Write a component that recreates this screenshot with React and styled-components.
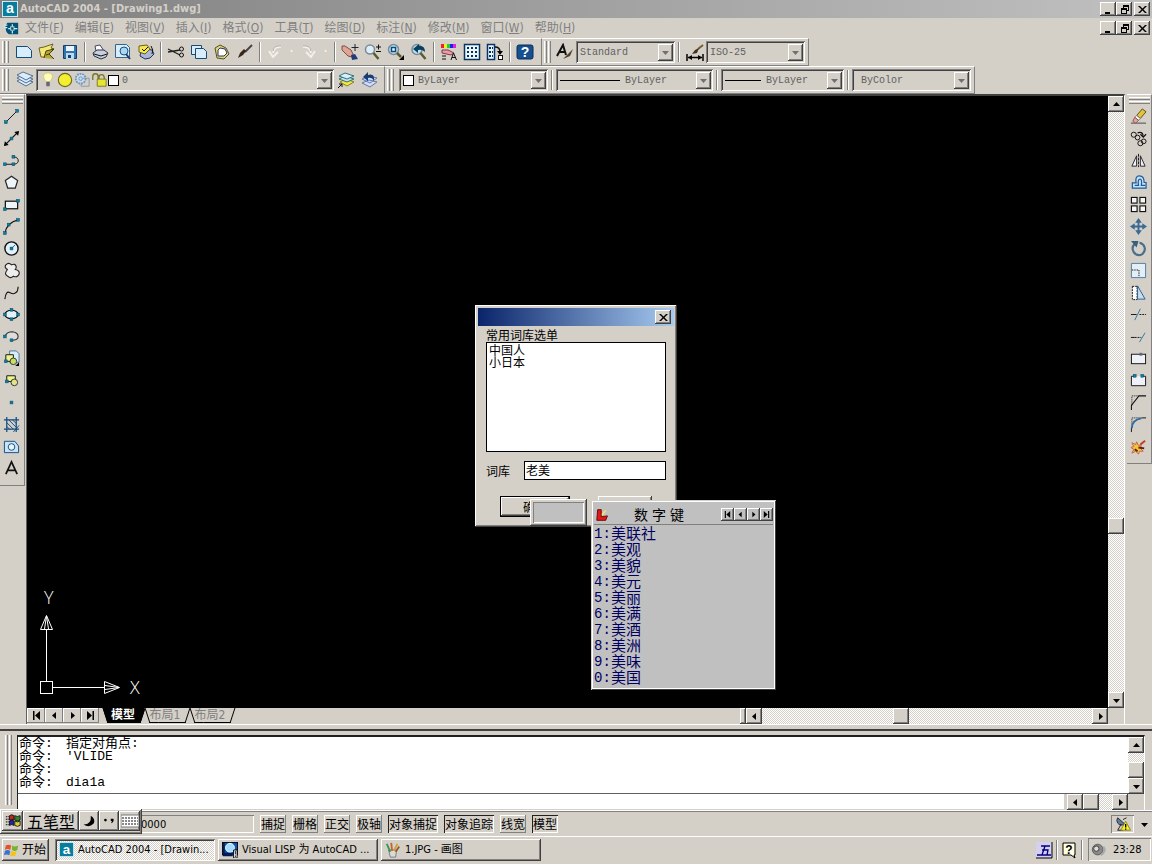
import React from "react";
import styled, { createGlobalStyle, css } from "styled-components";

const face = "#d4d0c8";
const ui = '"DejaVu Sans Condensed", "Noto Sans CJK SC", sans-serif';
const cjk = '"Noto Sans CJK SC", sans-serif';
const mono = '"Liberation Mono", "Noto Sans CJK SC", monospace';

const raised = css`
  box-shadow: inset -1px -1px #404040, inset 1px 1px #fff, inset -2px -2px #808080;
`;
const sunken = css`
  box-shadow: inset 1px 1px #808080, inset -1px -1px #fff, inset 2px 2px #404040;
`;
const thinSunken = css`
  box-shadow: inset 1px 1px #808080, inset -1px -1px #fff;
`;
const dither = css`
  background: repeating-conic-gradient(#ffffff 0 25%, #d4d0c8 0 50%) 0 0 / 2px 2px;
`;

const Global = createGlobalStyle`
  *, *::before, *::after { box-sizing: border-box; }
  body { margin: 0; background: ${face}; font: 11px/14px ${ui}; color: #000; overflow: hidden; }
  button, input, select { font: inherit; color: inherit; margin: 0; padding: 0; border: 0; border-radius: 0; background: none; outline: 0; }
  svg { display: block; flex: none; }
`;

/* ---------- window frame ---------- */
const Shell = styled.div`
  position: relative;
  display: flex;
  flex-direction: column;
  min-height: 100vh;
  background: ${face};
`;
const TitleBar = styled.header`
  display: flex;
  align-items: center;
  height: 18px;
  padding: 0 2px;
  gap: 2px;
  background: linear-gradient(90deg, #808080, #c0c0c0);
`;
const Title = styled.h1`
  flex: 1;
  margin: 0;
  color: ${face};
  font-size: 11px;
  font-weight: 700;
  line-height: 16px;
`;
const Controls = styled.div`
  display: flex;
  button:last-child { margin-left: 2px; }
`;
const BoxButton = styled.button`
  display: grid;
  place-items: center;
  width: 16px;
  height: 14px;
  background: ${face};
  ${raised}
`;
const MenuBar = styled.nav`
  display: flex;
  align-items: center;
  height: 20px;
  padding: 0 2px 0 4px;
`;
const MenuList = styled.div`
  display: flex;
  flex: 1;
`;
const MenuItem = styled.button`
  padding: 0 5px 0 6px;
  color: #808080;
  font-size: 12px;
  line-height: 18px;
`;

/* ---------- toolbars ---------- */
const ToolRow = styled.div`
  display: flex;
  height: 28px;
`;
const ToolBar = styled.div`
  display: flex;
  align-items: center;
  padding-right: ${(p) => p.$end || 5}px;
  border: solid;
  border-width: 1px 1px 1px 0;
  border-color: #fff #808080 #808080 #fff;
  box-shadow: 0 1px #fff;
`;
const Grip = styled.span`
  flex: none;
  width: 8px;
  height: ${(p) => p.$h || 22}px;
  margin: 0 ${(p) => p.$gap ?? 3}px 0 2px;
  background: linear-gradient(90deg, #fff 0 1px, ${face} 1px 2px, #808080 2px 3px, transparent 3px 4px, #fff 4px 5px, ${face} 5px 6px, #808080 6px 7px, transparent 7px);
`;
const ToolButton = styled.button`
  display: grid;
  place-items: center;
  width: 23px;
  height: 22px;
  flex: none;
`;
const DropDot = styled.button`
  width: 11px;
  height: 22px;
  color: #f4f2ee;
  font-size: 16px;
`;
const Divider = styled.span`
  width: 2px;
  height: 20px;
  margin: 0 ${(p) => p.$r ?? 2}px 0 3px;
  flex: none;
  border-left: 1px solid #808080;
  border-right: 1px solid #fff;
`;
const Combo = styled.div`
  display: flex;
  align-items: center;
  gap: 1px;
  flex: none;
  width: ${(p) => p.$w}px;
  height: 22px;
  padding: 2px 2px 2px 4px;
  ${sunken}
`;
const ComboSelect = styled.select`
  appearance: none;
  flex: 1;
  min-width: 0;
  height: 18px;
  padding: 2px 0 0 ${(p) => p.$pad || 0}px;
  color: #606060;
  font: 10px/16px ${mono};
`;
const ComboArrow = styled.span`
  display: grid;
  place-items: center;
  width: 15px;
  height: 17px;
  flex: none;
  pointer-events: none;
  background: ${face};
  ${raised}
`;
const Swatch = styled.span`
  width: 11px;
  height: 11px;
  flex: none;
  border: 1px solid #000;
  background: #fff;
`;
const LineSample = styled.span`
  width: ${(p) => p.$w}px;
  height: 1px;
  flex: none;
  background: #000;
`;

/* ---------- workspace ---------- */
const Workspace = styled.main`
  display: flex;
  flex: 1;
  min-height: 400px;
  border-bottom: 1px solid #fff;
`;
const SideBar = styled.aside`
  align-self: flex-start;
  display: flex;
  flex-direction: column;
  align-items: flex-start;
  width: 25px;
  padding-bottom: 6px;
  border: solid;
  border-width: 1px 1px 1px 0;
  border-color: #fff #808080 #808080 #fff;
`;
const SideGrip = styled.span`
  width: 21px;
  height: 8px;
  margin: 2px 0 0 2px;
  background: linear-gradient(#fff 0 1px, ${face} 1px 2px, #808080 2px 3px, transparent 3px 4px, #fff 4px 5px, ${face} 5px 6px, #808080 6px 7px, transparent 7px);
`;
const Doc = styled.section`
  flex: 1;
  min-width: 0;
  display: grid;
  grid-template-columns: 1fr 16px;
  grid-template-rows: 1fr 16px;
  margin: 0 2px 0 1px;
  border: solid;
  border-width: 2px 1px 0 1px;
  border-color: #404040 #fff #fff #606060;
`;
const Canvas = styled.div`
  display: flex;
  align-items: flex-end;
  padding: 0 0 8px 9px;
  background: #000;
`;
const ScrollTrack = styled.div`
  display: flex;
  flex-direction: ${(p) => (p.$v ? "column" : "row")};
  ${(p) => (p.$w ? `width: ${p.$w}px;` : "flex: 1;")}
  ${dither}
`;
const ScrollBox = styled.button`
  display: grid;
  place-items: center;
  width: 16px;
  height: 16px;
  flex: none;
  background: ${face};
  ${raised}
`;
const Gap = styled.span`
  flex: ${(p) => p.$f} 1 0;
`;
const DocFoot = styled.div`
  display: flex;
  min-width: 0;
`;
const TabNav = styled.button`
  display: grid;
  place-items: center;
  width: 18px;
  height: 15px;
  box-shadow: inset -1px -1px #808080, inset 1px 1px #fff;
`;
const Tabs = styled.div`
  display: flex;
  flex: 1;
  padding-left: 4px;
`;
const Tab = styled.button`
  position: relative;
  width: ${(p) => (p.$on ? 42 : 45)}px;
  height: 15px;
  padding-right: ${(p) => (p.$on ? 2 : 5)}px;
  color: ${(p) => (p.$on ? "#fff" : "#808080")};
  font-weight: ${(p) => (p.$on ? 700 : 400)};
  font-size: 12px;
  line-height: 13px;
  isolation: isolate;
  &::before, &::after {
    content: "";
    position: absolute;
    z-index: -1;
    top: 0;
    bottom: 0;
    width: 60%;
    border: 1px solid #000;
    border-top: 0;
    background: ${(p) => (p.$on ? "#000" : face)};
  }
  &::before { left: 2px; border-right: 0; transform: skewX(18deg); }
  &::after { right: 2px; border-left: 0; transform: skewX(-18deg); }
`;
const Splitter = styled.span`
  width: 6px;
  background: ${face};
  ${raised}
`;

/* ---------- command line ---------- */
const Command = styled.section`
  display: flex;
  height: 86px;
  padding: 10px 7px 0 3px;
  border-bottom: 1px solid #fff;
  background: linear-gradient(${face} 0 4px, #404040 4px 6px, ${face} 6px);
`;
const CommandBody = styled.div`
  flex: 1;
  display: grid;
  grid-template-columns: 1fr 16px;
  grid-template-rows: 57px 16px;
  border-top: 2px solid #202020;
  border-left: 1px solid #202020;
  border-right: 1px solid #fff;
`;
const History = styled.div`
  padding: 0 1px;
  background: #fff;
  border-bottom: 1px solid #606060;
`;
const HistoryLine = styled.div`
  display: flex;
  height: 13px;
  white-space: pre;
  font: 13px/13px ${mono};
`;
const Prompt = styled.span`
  width: 47px;
`;
const CommandEntry = styled.div`
  display: flex;
  min-width: 0;
`;
const CommandInput = styled.input`
  flex: 1;
  min-width: 0;
  height: 15px;
  margin-right: 3px;
  background: #fff;
  font: 13px/15px ${mono};
`;

/* ---------- status bar and taskbar ---------- */
const StatusBar = styled.div`
  display: flex;
  align-items: center;
  gap: 6px;
  height: 25px;
  padding-right: 3px;
  border-top: 1px solid #808080;
`;
const Coords = styled.output`
  width: 254px;
  height: 18px;
  padding-left: 141px;
  line-height: 19px;
  ${thinSunken}
`;
const Toggle = styled.button`
  height: 18px;
  padding: 0 1px;
  font-size: 12px;
  line-height: 20px;
  ${(p) => (p.$on ? "box-shadow: inset 1px 1px #202020, inset -1px -1px #fff;" : "box-shadow: inset -1px -1px #808080, inset 1px 1px #fff;")}
`;
const Spring = styled.span`
  flex: 1;
`;
const StatusTray = styled.button`
  display: grid;
  place-items: center;
  width: 23px;
  height: 18px;
  ${thinSunken}
`;
const TaskBar = styled.footer`
  display: flex;
  align-items: center;
  gap: 3px;
  height: 28px;
  padding: 0 1px 2px 2px;
  border-top: 1px solid #fff;
`;
const StartButton = styled.button`
  display: flex;
  align-items: center;
  gap: 2px;
  width: 47px;
  height: 22px;
  margin-right: 3px;
  padding-left: 2px;
  font-size: 12px;
  background: ${face};
  ${raised}
`;
const TaskButton = styled.button`
  display: flex;
  align-items: center;
  gap: 4px;
  width: 160px;
  height: 22px;
  padding: 0 4px;
  white-space: nowrap;
  background: ${face};
  ${raised}
  ${(p) => p.$on && dither}
  ${(p) => p.$on && sunken}
`;
const Tray = styled.div`
  display: flex;
  align-items: center;
`;
const TrayButton = styled.button`
  display: grid;
  place-items: center;
  width: 18px;
  height: 22px;
`;
const Clock = styled.div`
  display: flex;
  align-items: center;
  gap: 6px;
  width: 63px;
  height: 23px;
  padding-left: 3px;
  ${thinSunken}
`;

/* ---------- floating windows ---------- */
const Floating = styled.div`
  position: absolute;
  left: ${(p) => p.$x}px;
  top: ${(p) => p.$y}px;
`;
const Dialog = styled.form`
  display: flex;
  flex-direction: column;
  width: 202px;
  height: 222px;
  padding: 3px;
  font: 12px/14px ${cjk};
  background: ${face};
  ${raised}
`;
const DialogTitle = styled.div`
  display: flex;
  align-items: center;
  justify-content: flex-end;
  height: 18px;
  padding-right: 3px;
  background: linear-gradient(90deg, #0a246a, #a6caf0);
`;
const DialogBody = styled.div`
  display: flex;
  flex-direction: column;
  padding: 2px 8px 0 8px;
`;
const Label = styled.label`
  line-height: 14px;
`;
const WordList = styled.select`
  height: 110px;
  overflow: hidden;
  border: 1px solid #000;
  background: #fff;
  option {
    display: flex;
    align-items: center;
    height: 12px;
    min-height: 12px;
    padding: 0 2px;
  }
`;
const Field = styled.div`
  display: flex;
  align-items: center;
  gap: 14px;
  margin-top: 9px;
`;
const TextInput = styled.input`
  flex: 1;
  min-width: 0;
  height: 19px;
  padding: 0 1px 2px;
  border: 1px solid #000;
  background: #fff;
`;
const DialogButtons = styled.div`
  display: flex;
  gap: 28px;
  margin-top: 16px;
  padding-left: 14px;
`;
const PushButton = styled.button`
  flex: none;
  width: ${(p) => (p.$main ? 70 : 54)}px;
  height: 21px;
  border: ${(p) => (p.$main ? "1px solid #000" : "0")};
  ${raised}
`;
const Composition = styled.div`
  width: 57px;
  height: 27px;
  padding: 3px;
  background: ${face};
  ${raised}
  &::before {
    content: "";
    display: block;
    height: 21px;
    background: #c0c0c0;
    box-shadow: inset 1px 1px #808080, inset -1px -1px #fff;
  }
`;
const Candidates = styled.section`
  width: 185px;
  height: 190px;
  padding: 3px;
  background: #c0c0c0;
  box-shadow: inset 1px 1px #d4d0c8, inset -1px -1px #404040, inset 2px 2px #fff, inset -2px -2px #fff;
`;
const CandidateHead = styled.header`
  display: flex;
  align-items: center;
  height: 22px;
  padding: 2px 0 0 1px;
  border-bottom: 1px solid #808080;
`;
const CandidateTitle = styled.h2`
  flex: 1;
  margin: 0;
  padding-right: 14px;
  text-align: center;
  font: 400 14px/18px ${ui};
`;
const Pager = styled.button`
  display: grid;
  place-items: center;
  width: 13px;
  height: 13px;
  ${raised}
`;
const CandidateList = styled.ol`
  margin: 0;
  padding: 0;
  list-style: none;
  color: #000060;
  font: 15px/15px ${cjk};
  li { display: flex; height: 16px; }
`;
const Key = styled.span`
  width: 17px;
  font: 14px/18px ${mono};
`;
const ImeBar = styled.div`
  display: flex;
  width: 142px;
  height: 25px;
  padding: 2px;
  background: ${face};
  ${raised}
`;
const ImeButton = styled.button`
  display: grid;
  place-items: center;
  width: ${(p) => p.$w}px;
  height: 20px;
  font: 16px/18px ${cjk};
  ${raised}
`;

/* ---------- drawings ---------- */
const K = { stroke: "#111", fill: "none" };
const pt = (x, y) => <rect key={x + "-" + y} x={x - 1.5} y={y - 1.5} width="3" height="3" fill="#0c7f9d" stroke="#04466a" strokeWidth=".5" />;
const sheet = "#d8edfb";

const art = {
  acad: <><rect width="18" height="18" fill="#e6f6fa" /><rect x="1" y="1" width="16" height="16" fill="#087d9c" /><text x="9" y="14" textAnchor="middle" fontFamily="Liberation Sans" fontWeight="700" fontSize="16" fill="#fff">a</text></>,
  dwg: <><path d="M4 2h13v14H6Q1 13 2 5z" fill="#07506f" /><path d="M0 5h4M0 8h4M5 9h3M12 9h4M10 4v3M10 12v3" stroke="#bdf0ff" strokeWidth="1.500" /><rect x="8" y="7" width="4" height="4" fill="#07506f" stroke="#bdf0ff" /></>,
  new: <path d="M1.500 3.500h11l4 4v7h-15z" fill={sheet} stroke="#174a75" />,
  open: <><path d="M1 5l5-1 9-3-2 4 3 1-4 3-3 5-6 0z" fill="#f5e87b" stroke="#6b6218" /><path d="M6 15l2-7 8-2-5 5 5 5M11 11l-3 1" fill="#b8a934" stroke="#453e0c" /></>,
  save: <><path d="M2.500 2.500h13v13h-13z" fill="#3375ad" stroke="#123e70" /><path d="M5 3h8v5H5z" fill="#e8f4ff" /><path d="M5 10h8v6H5z" fill="#b9d9ef" /><path d="M7 12h3v3H7z" fill="#123e70" /></>,
  print: <><path d="M5 8L4 3l5-1 4 6" fill="#fff" stroke="#446" /><path d="M2 10l4-3h7l4 3-2 4-5 2-7-3z" fill="#c8d0dc" stroke="#2a3050" /><path d="M3 11l7 2 6-2" {...K} /></>,
  preview: <><path d="M1.500 1.500h11l3 3v10h-14z" fill={sheet} stroke="#37648b" /><circle cx="10" cy="8" r="4" fill="#a8d8f5" stroke="#1d4f80" /><path d="M12 11l4 5" stroke="#1d3f60" strokeWidth="2" /></>,
  publish: <><path d="M4 9l5-3 6 1 2 4-4 4-5 1-5-3z" fill="#aab8d8" stroke="#223060" /><path d="M2 3l8-1 3 4-5 5-6-2z" fill="#f6e74c" stroke="#6b6218" /><path d="M5 6l2 2 4-4M14 3q3 4 1 8" {...K} /></>,
  cut: <><path d="M1 6l12 6M1 9l12-2" stroke="#222" strokeWidth="1.300" /><circle cx="14.500" cy="6" r="2" {...K} /><circle cx="14.500" cy="12" r="2" {...K} /></>,
  copy: <><path d="M1.500 2.500h10v9h-10z" fill={sheet} stroke="#174a75" /><path d="M5.500 5.500h8l3 3v7h-11z" fill={sheet} stroke="#174a75" /></>,
  paste: <><path d="M2 5l5-3 6 3 3 6-5 5-7-1z" fill="#d9d38a" stroke="#55501c" /><path d="M5 7l2-2 5 1 2 4-3 3H5z" fill="#fff" stroke="#335" /></>,
  brush: <><path d="M16 2l-7 7" stroke="#444" strokeWidth="2" /><path d="M10 8L7 12l-5 3 2-5 4-4z" fill="#3b2418" /></>,
  undo: <><path d="M15 4q-7-1-8 6M3 8l4 6 5-5" fill="none" stroke="#f2f0ec" strokeWidth="2" /><path d="M15 3q-7-1-8 5" fill="none" stroke="#b4b0a8" /></>,
  redo: <><path d="M3 4q7-1 8 6M6 9l5 5 4-6" fill="none" stroke="#f2f0ec" strokeWidth="2" /><path d="M3 3q7-1 8 5" fill="none" stroke="#b4b0a8" /></>,
  pan: <><path d="M1 3l3 0 6 4 2 4-1 3-4-1-6-6z" fill="#e0a494" stroke="#824b43" /><path d="M10 12l4-1 3 5-6 1z" fill="#203b7c" /><path d="M14 1v7M10.500 4.500h7" stroke="#223" /></>,
  zoom: <><circle cx="6" cy="6.500" r="4.500" fill="#dceefa" stroke="#7a8a98" strokeWidth="1.500" /><path d="M9.500 10l5 6" stroke="#5b5b30" strokeWidth="2.500" /><path d="M12 4h5M14.500 1.500v5M12 8.500h5" stroke="#111" /></>,
  zoomWin: <><circle cx="6.500" cy="6.500" r="5" fill="#bde2f7" stroke="#7a8a98" strokeWidth="1.500" /><rect x="4.500" y="4.500" width="4" height="4" fill="#fff" stroke="#064c78" strokeWidth="1.500" /><path d="M10 10l4 4" stroke="#5b5b30" strokeWidth="2.500" /><path d="M17 12v5h-5z" /></>,
  zoomPrev: <><circle cx="7" cy="6.500" r="5" fill="#bde2f7" stroke="#7a8a98" strokeWidth="1.500" /><path d="M10.500 10l5 6" stroke="#5b5b30" strokeWidth="2.500" /><path d="M15 9q0-7-6-6V1L3 6l5 4V7q4-1 7 2z" fill="#07405f" /></>,
  props: <><path d="M1 1h3v4H1z" fill="#e22" /><path d="M4 1h3v4H4z" fill="#ee2" /><path d="M7 1h3v4H7z" fill="#2c4" /><path d="M10 1h3v4h-3z" fill="#22e" /><path d="M13 1h3v4h-3z" fill="#d2d" /><path d="M2 7l6 0 6 3-3 2-9-2z" fill="#e4a0a4" stroke="#8b3344" /><path d="M2 13h4M2 16h4M11 17l2.500-7 3 7M12 14.500h4" stroke="#111" fill="none" /></>,
  center: <><rect x="1.500" y="1.500" width="15" height="15" fill="#eaf7ff" stroke="#07335b" strokeWidth="1.500" />{[4, 8, 12].map((y) => [4, 8, 12].map((x) => <rect key={x + "," + y} x={x} y={y} width="2" height="2" fill="#07335b" />))}</>,
  palettes: <><rect x="1.500" y="1.500" width="7" height="15" fill="#eaf7ff" stroke="#07336b" strokeWidth="1.500" /><path d="M3 5h4M3 9h4M3 13h4" stroke="#07336b" strokeWidth="2" strokeDasharray="2 1" /><path d="M9 4q5 0 5 5" {...K} strokeWidth="1.500" /><path d="M11 8l3 4 3-4z" /><rect x="12.500" y="12.500" width="4" height="4" fill="#fff" stroke="#111" /></>,
  help: <><rect x="1" y="2" width="16" height="14" rx="2" fill="#17508f" stroke="#062a5c" /><text x="9" y="14" textAnchor="middle" fontFamily="Liberation Sans" fontWeight="700" fontSize="14" fill="#fff">?</text></>,
  textStyle: <><path d="M1 13L7 2l3 10M4 9h5" fill="none" stroke="#111" strokeWidth="2" /><path d="M17 6l-5 5-5 5 7-3z" fill="#4f4428" /></>,
  dimStyle: <><path d="M1 11v7M17 11v7M2 14.500h14" stroke="#000" strokeWidth="1.500" /><path d="M2 14.500l4-2.500v5zM16 14.500l-4-2.500v5z" /><path d="M17 2l-5 4" stroke="#775c35" strokeWidth="2" /><path d="M13 5l-2 5-5 1 3-4z" fill="#3f3020" /></>,
  layers: <>{[10, 7, 4].map((y) => <path key={y} d={`M1 ${y}l6-3 10 4-7 4z`} fill="#d7ecfc" stroke="#55708d" />)}</>,
  bulb: <><path d="M4 5q0-4 5-4t5 4q0 3-3 6H7Q4 8 4 5z" fill="#fffbbd" stroke="#d6c96c" /><path d="M7 11h4v5H7z" fill="#667" /></>,
  sun: <circle cx="9" cy="9" r="7.500" fill="#f4ee31" stroke="#6d6b22" strokeWidth="1.300" />,
  freeze: <><circle cx="7.500" cy="7.500" r="5.500" fill="#c5dcef" stroke="#7292b5" strokeWidth="2" strokeDasharray="2 1" /><circle cx="7.500" cy="7.500" r="2" fill="none" stroke="#7292b5" /><path d="M10 7h7v9H8v-3" fill="none" stroke="#8296ab" /></>,
  lock: <><path d="M2 9V5q0-3 3-3t3 3v4M9 8V6q0-3 3-3t3 5" fill="none" stroke="#79742d" strokeWidth="1.500" /><path d="M7 8h10v8H7z" fill="#e5e633" stroke="#77741e" /></>,
  makeLayer: <><path d="M3 11l6-3 8 3-7 4z" fill="#f0e83f" stroke="#88801a" /><path d="M2 8l6-3 9 3-7 3z" fill="#bfe2e8" stroke="#33717c" /><path d="M2 5l6-3 9 3-7 3z" fill="#d8effa" stroke="#33717c" /><path d="M1 17l4-4M2 13h3v3" {...K} /></>,
  layerPrev: <><path d="M2 12l7-3 8 2-7 5zM2 8l7-3 8 2-7 5z" fill="#ccdcfa" stroke="#6977a5" /><path d="M14 10q1-8-6-6V1L3 6l5 4V7q4-1 6 3z" fill="#153e75" /></>,
  line: <><path d="M3 15L15 3" {...K} />{[pt(3, 15), pt(15, 3)]}</>,
  xline: <><path d="M2 16L16 2" {...K} strokeWidth="1.300" /><path d="M1 17l1-5 4 4zM17 1l-5 1 4 4z" />{pt(9, 9)}</>,
  pline: <><path d="M2 13h10q5-1 4-5-1-3-5-3" {...K} />{[pt(2, 13), pt(11, 13), pt(11, 5)]}</>,
  polygon: <path d="M9 2.500l6.500 4.500-2.500 8H5L2.500 7z" fill="#eef6fa" stroke="#222" strokeWidth="1.300" />,
  rect: <><rect x="2.500" y="5.500" width="13" height="8" fill="#eef6fa" stroke="#111" strokeWidth="1.300" />{[pt(2, 14), pt(16, 5)]}</>,
  arc: <><path d="M2 16Q4 5 16 2" {...K} strokeWidth="1.200" />{[pt(2, 16), pt(6, 7), pt(16, 2)]}</>,
  circle: <><circle cx="9" cy="9" r="7" fill="#e3f2fa" stroke="#111" strokeWidth="1.500" /><path d="M9 9l4-4" stroke="#087d9c" />{pt(9, 9)}</>,
  cloud: <path d="M5 8Q1 6 3 3q3-3 6 0 4-2 5 2 0 2-1 3 5 1 4 5-2 4-6 2-3 3-6 0-4-2-1-6 0-1 1-1z" fill="#eee" stroke="#222" strokeWidth="1.200" />,
  spline: <path d="M2 16Q3 7 7 9t5 1q4-1 4-7" {...K} strokeWidth="1.200" />,
  ellipse: <><ellipse cx="9" cy="9" rx="7" ry="4.500" fill="#e3f2fa" stroke="#111" strokeWidth="1.200" />{[pt(2, 9), pt(16, 9), pt(9, 4), pt(9, 14)]}</>,
  ellArc: <><path d="M2 9q2-5 8-5 6 1 6 5t-7 4" fill="#ddd" stroke="#333" strokeWidth="1.200" />{[pt(2, 9), pt(9, 13)]}</>,
  insert: <><path d="M7 1h7l3 3v9H7z" fill={sheet} stroke="#49759b" /><path d="M3 5h8v7H3z" fill="#eef58d" stroke="#111" /><circle cx="11" cy="12" r="3.500" fill="#c8df66" stroke="#333" /><path d="M17 13v4h-4z" />{pt(3, 12)}</>,
  block: <><path d="M4 4h9v6H4z" fill="#eef58d" stroke="#111" /><circle cx="12" cy="11" r="3.500" fill="#dfe48a" stroke="#333" />{pt(4, 10)}</>,
  point: pt(9, 9),
  hatch: <><path d="M4 1v16M14 1v16M1 4h16M1 14h16" stroke="#124a80" strokeWidth="1.300" /><path d="M4 7l7 7M4 11l3 3M6 4l8 8M10 4l4 4M11 17l6-7" stroke="#124a80" /></>,
  region: <><path d="M1.500 3.500h11l4 5v7h-15z" fill="#c9e3f6" stroke="#124a80" /><circle cx="9" cy="9.500" r="3.500" fill="#e9f5fc" stroke="#124a80" /></>,
  mtext: <path d="M3 15L9 2l6 13M5 11h8" fill="none" stroke="#111" strokeWidth="1.800" />,
  erase: <><path d="M1 16h16" stroke="#444" /><path d="M7 8L13 1l4 3-6 7z" fill="#e3c23c" stroke="#5a4a1b" /><path d="M7 8l4 3-2 2-4-3z" fill="#fff" stroke="#777" /><path d="M5 10l4 3-3 3-3-2z" fill="#f0a0a0" stroke="#8b5353" /></>,
  copyObj: <><circle cx="4" cy="5" r="2.700" {...K} /><circle cx="8" cy="8" r="2.500" {...K} /><circle cx="11" cy="14" r="2.700" {...K} /><circle cx="14.500" cy="12" r="2.500" {...K} /><path d="M8 3q5-2 6 3M11 4.500l3 3 3-3" {...K} strokeWidth="1.300" /></>,
  mirror: <><path d="M9 2v14" stroke="#111" strokeDasharray="3 1" /><path d="M7 4v11H2zM11 4v11h5z" fill="#eef" stroke="#222" /></>,
  offset: <path d="M2.500 15V9.500h4Q5 2 10 2t5 7h2v6zM5 12h4Q8 5.500 10.500 5.500T12 12h4" fill="#c9e2fb" stroke="#1d5c96" strokeWidth="1.300" />,
  array: <>{[[1.5, 1.5], [10.5, 1.5], [1.5, 10.5], [10.5, 10.5]].map(([x, y]) => <rect key={x + "," + y} x={x} y={y} width="6" height="6" fill="#f6f6f6" stroke="#111" strokeWidth="1.200" />)}</>,
  move: <><path d="M9 3v12M3 9h12" stroke="#3a6a93" strokeWidth="2" /><path d="M9 0l3.500 5h-7zM9 18l3.500-5h-7zM0 9l5-3.500v7zM18 9l-5-3.500v7z" fill="#3a6a93" /></>,
  rotate: <><path d="M5 4Q1 8 4 13q4 5 9 2 5-5 1-10-2-2-4-2" fill="none" stroke="#4a6f8c" strokeWidth="2.300" /><path d="M1 1h8L7 8z" fill="#3a5f7c" /></>,
  scale: <><path d="M1.500 1.500h15v15h-15z" fill="#e4eef6" stroke="#4e7ca3" /><path d="M2 8.500h7.500V16" fill="none" stroke="#111" strokeDasharray="1.500 1" /></>,
  stretch: <><path d="M2.500 2.500h5v14h-5z" fill="#fff" stroke="#111" strokeDasharray="2 1" /><path d="M8 2l8 14H8z" fill="#c9dcec" stroke="#245f93" /></>,
  trim: <><path d="M1 9h6" {...K} /><path d="M10 9h7" {...K} strokeDasharray="2 1" /><path d="M5 15l6-12" stroke="#2a7aa0" /></>,
  extend: <><path d="M1 10h4" {...K} /><path d="M5 10h7" {...K} strokeDasharray="2 1" /><path d="M10 15l6-10" stroke="#2a7aa0" /></>,
  breakPt: <><rect x="1.500" y="4.500" width="15" height="10" fill="#eef2f8" stroke="#111" /><rect x="10" y="3" width="3" height="3" fill="#667" /></>,
  breakSeg: <><path d="M5 4.500H1.500v10h15v-10H13" fill="#eef2f8" stroke="#111" />{[pt(5, 4), pt(13, 4)]}</>,
  chamfer: <><path d="M2 12V2h8" {...K} strokeDasharray="1 1" /><path d="M1.500 17v-5l8-10H17" {...K} strokeWidth="1.100" /></>,
  fillet: <><path d="M2 12V2h10" {...K} strokeDasharray="1 1" /><path d="M1.500 17v-5M12 2h5" {...K} /><path d="M2 13Q2 4 12 2.500" fill="none" stroke="#2f6da6" strokeWidth="2" /></>,
  explode: <><path d="M2 5l4 2 1-3 2 4 3-1-1 4 3 3-4 0-1 3-3-3-4 2 2-4-3-2 3-1z" fill="#f2c33d" stroke="#c36340" /><path d="M11 7l5-4" stroke="#c33b28" strokeWidth="2" /><path d="M9 10l6 1M5 12l3 2" stroke="#5c1d18" strokeWidth="2" /></>,
  flag: <><path d="M1 4h3M1 7h3M1 10h3M1 13h3" stroke="#111" strokeWidth="1.500" strokeDasharray="1 1" /><path d="M5 3q3-2 5 0v5q-2-2-5 0z" fill="#c22" stroke="#111" /><path d="M11 3q3 2 6 0v5q-3 2-6 0z" fill="#2a8a2a" stroke="#111" /><path d="M5 9q3-2 5 0v5q-2-2-5 0z" fill="#22a" stroke="#111" /><path d="M11 9q3 2 6 0v5q-3 2-6 0z" fill="#dc3" stroke="#111" /></>,
  moon: <path d="M11 3q6 4 3 9-5 5-11 1 9 0 8-10z" />,
  punct: <><circle cx="5" cy="8" r="1.500" /><path d="M11 6.500h3q1 3-2 5l-.5-1 1-1.500H11z" /></>,
  keyboard: <><rect x="0" y="3" width="18" height="12" fill="#fff" stroke="#777" /><path d="M1 6h16M1 9h16M1 12h16" stroke="#888" strokeWidth="2" strokeDasharray="2 1" /></>,
  windows: <><path d="M2 4q3-2 6 0L7 9Q4 7 1 9z" fill="#e5532a" /><path d="M9 4q3 2 7 0l-1 5q-3 2-6 0z" fill="#75b52a" /><path d="M1 10q3-2 6 0l-1 5q-3-2-6 0z" fill="#3874cf" /><path d="M8 10q3 2 6 0l-1 5q-3 2-6 0z" fill="#f4c11d" /></>,
  lisp: <><rect x=".5" y=".5" width="17" height="14" fill="#0c54b2" stroke="#000" /><circle cx="9" cy="6.500" r="5" fill="#9fdcff" stroke="#fff" /><path d="M1 1h2v11h9v4H1z" fill="#041a55" /><path d="M13 9h4v9h-4z" fill="#fff" stroke="#000" /><path d="M15 10v4M15 15v2" stroke="#000" /></>,
  paint: <><path d="M4 9h9l-1 8H6z" fill="#d9d9d9" stroke="#777" /><path d="M6 11L2 2" stroke="#2a9c4a" strokeWidth="2" /><path d="M8 10L7 1" stroke="#d25b34" strokeWidth="2" /><path d="M10 10l4-8" stroke="#d2a224" strokeWidth="2" /><path d="M12 11l4-6" stroke="#8a5a3c" strokeWidth="2" /></>,
  dish: <><path d="M3 2l8 7q-5 3-8-1-2-3 0-6z" fill="#5d7c9c" stroke="#223" /><path d="M7 9l-4 7h6M9 4l4-2" {...K} /><path d="M12 6l5.500 10h-11z" fill="#f8f12c" stroke="#857d10" /><path d="M12 9v4M12 14v1.500" stroke="#000" strokeWidth="1.500" /></>,
  wubi: <><rect x="1" y="1" width="16" height="16" fill="#d4d0ee" /><path d="M17 1v16H1" stroke="#000" fill="none" /><path d="M6 5h9M10 5l-3 9M7 9h6l-1 5M2 14h14" stroke="#000080" fill="none" strokeWidth="1.300" /></>,
  askTip: <><path d="M3 2h12v12h-1l1 3-4-3H3z" fill="#ffffe1" stroke="#000" /><text x="9" y="12.500" textAnchor="middle" fontFamily="Liberation Sans" fontWeight="700" fontSize="12">?</text></>,
  speaker: <><circle cx="7.500" cy="8.500" r="6" fill="#8a8a8a" stroke="#555" /><circle cx="6" cy="7.500" r="3" fill="#ddd" stroke="#333" /><path d="M14 5q4 5-3 10" stroke="#aaa" fill="none" strokeWidth="2" /></>,
  imeLogo: <><path d="M3 3h4v8l7-1-2 5H2z" fill="#e01818" stroke="#600" /><path d="M8 9l4-5" stroke="#f3e36c" strokeWidth="2" /></>,
};

const Icon = ({ name, size = 18 }) => (
  <svg width={size} height={size} viewBox="0 0 18 18" aria-hidden="true">{art[name]}</svg>
);

const arrowPaths = {
  up: "M1 6h7L4.500 2z",
  down: "M1 3h7L4.500 7z",
  left: "M6 1v7L2 4.500z",
  right: "M3 1v7l4-3.500z",
  first: "M1 0h1.500v9H1zM8 0v9L3 4.500z",
  last: "M6.500 0H8v9H6.500zM1 0v9l5-4.500z",
};
const Arrow = ({ dir, color = "#000", size = 9 }) => (
  <svg width={size} height={size} viewBox="0 0 9 9" aria-hidden="true"><path d={arrowPaths[dir]} fill={color} /></svg>
);

const controlPaths = {
  minimize: "M1 7h5v2H1z",
  restore: "M3 0h6v6H7v3H1V3h2zM4 2v1h3v2h1V2zM2 5v3h4V5z",
  close: "M0 1h2l2.500 2.500L7 1h2L5.500 4.500 9 8H7L4.500 5.500 2 8H0l3.500-3.500z",
};
const WindowButton = ({ kind }) => (
  <BoxButton type="button" aria-label={kind}>
    <svg width="9" height="9" viewBox="0 0 9 9"><path fillRule="evenodd" d={controlPaths[kind]} /></svg>
  </BoxButton>
);
const WindowControls = () => (
  <Controls>
    <WindowButton kind="minimize" />
    <WindowButton kind="restore" />
    <WindowButton kind="close" />
  </Controls>
);

const Tools = ({ names }) => names.map((n, i) => {
  if (n === "|") return <Divider key={i} />;
  if (n === ".") return <DropDot key={i} aria-label="more">·</DropDot>;
  return <ToolButton key={i} aria-label={n}><Icon name={n} /></ToolButton>;
});
const Dropdown = ({ label, value, width, pad, children }) => (
  <Combo $w={width}>
    {children}
    <ComboSelect aria-label={label} $pad={pad} defaultValue={value}><option>{value}</option></ComboSelect>
    <ComboArrow><Arrow dir="down" color="#707070" /></ComboArrow>
  </Combo>
);
const Side = ({ names }) => (
  <SideBar>
    <SideGrip />
    {names.map((n) => <ToolButton key={n} aria-label={n}><Icon name={n} size={17} /></ToolButton>)}
  </SideBar>
);
const Scroll = ({ vertical, width, before, after }) => (
  <ScrollTrack $v={vertical} $w={width}>
    <ScrollBox aria-label="scroll back"><Arrow dir={vertical ? "up" : "left"} /></ScrollBox>
    <Gap $f={before} />
    <ScrollBox aria-label="thumb" />
    <Gap $f={after} />
    <ScrollBox aria-label="scroll forward"><Arrow dir={vertical ? "down" : "right"} /></ScrollBox>
  </ScrollTrack>
);

const menus = [["文件", "F"], ["编辑", "E"], ["视图", "V"], ["插入", "I"], ["格式", "O"], ["工具", "T"], ["绘图", "D"], ["标注", "N"], ["修改", "M"], ["窗口", "W"], ["帮助", "H"]];
const standard = ["new", "open", "save", "|", "print", "preview", "publish", "|", "cut", "copy", "paste", "brush", "|", "undo", ".", "redo", ".", "|", "pan", "zoom", "zoomWin", "zoomPrev", "|", "props", "center", "palettes", "|", "help"];
const drawTools = ["line", "xline", "pline", "polygon", "rect", "arc", "circle", "cloud", "spline", "ellipse", "ellArc", "insert", "block", "point", "hatch", "region", "mtext"];
const modifyTools = ["erase", "copyObj", "mirror", "offset", "array", "move", "rotate", "scale", "stretch", "trim", "extend", "breakPt", "breakSeg", "chamfer", "fillet", "explode"];
const history = ["指定对角点:", "'VLIDE", "", "dia1a"];
const toggles = [["捕捉"], ["栅格"], ["正交"], ["极轴"], ["对象捕捉", true], ["对象追踪", true], ["线宽"], ["模型", true]];
const candidates = ["美联社", "美观", "美貌", "美元", "美丽", "美满", "美酒", "美洲", "美味", "美国"];

const UcsIcon = () => (
  <svg width="120" height="114" viewBox="0 0 120 114" fill="none" stroke="#fff" aria-label="UCS">
    <rect x="4.500" y="95.500" width="12" height="12" />
    <path d="M10.500 95V44M17 101.500h52M10.500 29.500l-6 14h12zM10.500 30l-2 13M10.500 30l2 13M83.500 101.500l-15-6v12zM83 101.500l-14-2M83 101.500l-14 2" />
    <g fill="#fff" stroke="none" fontFamily="Open Sans, sans-serif" fontWeight="300" fontSize="18">
      <text x="8" y="18">Y</text>
      <text x="94" y="108">X</text>
    </g>
  </svg>
);

const WordDialog = () => (
  <Dialog onSubmit={(e) => e.preventDefault()}>
    <DialogTitle><WindowButton kind="close" /></DialogTitle>
    <DialogBody>
      <Label htmlFor="words">常用词库选单</Label>
      <WordList id="words" size={8}>
        <option>中国人</option>
        <option>小日本</option>
      </WordList>
      <Field>
        <Label htmlFor="word">词库</Label>
        <TextInput id="word" defaultValue="老美" />
      </Field>
      <DialogButtons>
        <PushButton $main>确定</PushButton>
        <PushButton type="button" aria-label="cancel" />
      </DialogButtons>
    </DialogBody>
  </Dialog>
);

const CandidateWindow = () => (
  <Candidates>
    <CandidateHead>
      <Icon name="imeLogo" size={16} />
      <CandidateTitle>数 字 键</CandidateTitle>
      {["first", "left", "right", "last"].map((d) => <Pager key={d} aria-label={d}><Arrow dir={d} size={7} /></Pager>)}
    </CandidateHead>
    <CandidateList>
      {candidates.map((word, i) => <li key={word}><Key>{(i + 1) % 10}:</Key>{word}</li>)}
    </CandidateList>
  </Candidates>
);

export default function App() {
  return (
    <Shell>
      <Global />
      <TitleBar>
        <Icon name="acad" size={16} />
        <Title>AutoCAD 2004 - [Drawing1.dwg]</Title>
        <WindowControls />
      </TitleBar>
      <MenuBar>
        <Icon name="dwg" size={15} />
        <MenuList>
          {menus.map(([name, key]) => <MenuItem key={key}>{name}(<u>{key}</u>)</MenuItem>)}
        </MenuList>
        <WindowControls />
      </MenuBar>

      <ToolRow>
        <ToolBar><Grip $gap={2} /><Tools names={standard} /></ToolBar>
        <ToolBar $end={3}>
          <Grip $gap={1} />
          <Tools names={["textStyle"]} />
          <Dropdown label="Text style" value="Standard" width={99} />
          <Divider $r={3} />
          <Tools names={["dimStyle"]} />
          <Dropdown label="Dimension style" value="ISO-25" width={99} />
        </ToolBar>
      </ToolRow>
      <ToolRow>
        <ToolBar $end={4}>
          <Grip />
          <Tools names={["layers"]} />
          <Dropdown label="Layer" value="0" width={298} pad={2}>
            {["bulb", "sun", "freeze", "lock"].map((n) => <Icon key={n} name={n} size={16} />)}
            <Swatch />
          </Dropdown>
          <Tools names={["makeLayer", "layerPrev"]} />
        </ToolBar>
        <ToolBar $end={3}>
          <Grip $gap={4} />
          <Dropdown label="Color" value="ByLayer" width={149} pad={3}><Swatch /></Dropdown>
          <Divider $r={3} />
          <Dropdown label="Linetype" value="ByLayer" width={157} pad={4}><LineSample $w={60} /></Dropdown>
          <Divider $r={3} />
          <Dropdown label="Lineweight" value="ByLayer" width={123} pad={4}><LineSample $w={36} /></Dropdown>
          <Divider $r={3} />
          <Dropdown label="Plot style" value="ByColor" width={119} pad={5} />
        </ToolBar>
      </ToolRow>

      <Workspace>
        <Side names={drawTools} />
        <Doc>
          <Canvas><UcsIcon /></Canvas>
          <Scroll vertical before={405} after={158} />
          <DocFoot>
            {["first", "left", "right", "last"].map((d) => <TabNav key={d} aria-label={d}><Arrow dir={d} /></TabNav>)}
            <Tabs>
              <Tab $on>模型</Tab>
              <Tab>布局1</Tab>
              <Tab>布局2</Tab>
            </Tabs>
            <Splitter />
            <Scroll width={362} before={131} after={183} />
          </DocFoot>
        </Doc>
        <Side names={modifyTools} />
      </Workspace>

      <Command>
        <Grip $gap={4} $h={70} />
        <CommandBody>
          <History>
            {history.map((text, i) => <HistoryLine key={i}><Prompt>命令:</Prompt>{text}</HistoryLine>)}
          </History>
          <Scroll vertical before={9} after={0} />
          <CommandEntry>
            <CommandInput aria-label="Command" />
            <Scroll width={61} before={0} after={13} />
          </CommandEntry>
        </CommandBody>
      </Command>

      <StatusBar>
        <Coords>0000</Coords>
        {toggles.map(([name, on]) => <Toggle key={name} $on={on}>{name}</Toggle>)}
        <Spring />
        <StatusTray aria-label="Communication center"><Icon name="dish" size={16} /></StatusTray>
        <Arrow dir="down" />
      </StatusBar>
      <TaskBar>
        <StartButton><Icon name="windows" size={16} />开始</StartButton>
        <TaskButton $on><Icon name="acad" size={15} />AutoCAD 2004 - [Drawin...</TaskButton>
        <TaskButton><Icon name="lisp" size={16} />Visual LISP 为 AutoCAD ...</TaskButton>
        <TaskButton><Icon name="paint" size={16} />1.JPG - 画图</TaskButton>
        <Spring />
        <Tray>
          <TrayButton aria-label="Input method"><Icon name="wubi" /></TrayButton>
          <Divider />
          <TrayButton aria-label="Help"><Icon name="askTip" /></TrayButton>
          <Divider />
        </Tray>
        <Clock><Icon name="speaker" size={16} />23:28</Clock>
      </TaskBar>

      <Floating $x={475} $y={305}><WordDialog /></Floating>
      <Floating $x={530} $y={499}><Composition /></Floating>
      <Floating $x={591} $y={500}><CandidateWindow /></Floating>
      <Floating $x={0} $y={809}>
        <ImeBar>
          <ImeButton $w={21} aria-label="Windows"><Icon name="flag" size={16} /></ImeButton>
          <ImeButton $w={56}>五笔型</ImeButton>
          <ImeButton $w={20} aria-label="Full width"><Icon name="moon" size={16} /></ImeButton>
          <ImeButton $w={20} aria-label="Punctuation"><Icon name="punct" size={16} /></ImeButton>
          <ImeButton $w={21} aria-label="Keyboard"><Icon name="keyboard" /></ImeButton>
        </ImeBar>
      </Floating>
    </Shell>
  );
}
